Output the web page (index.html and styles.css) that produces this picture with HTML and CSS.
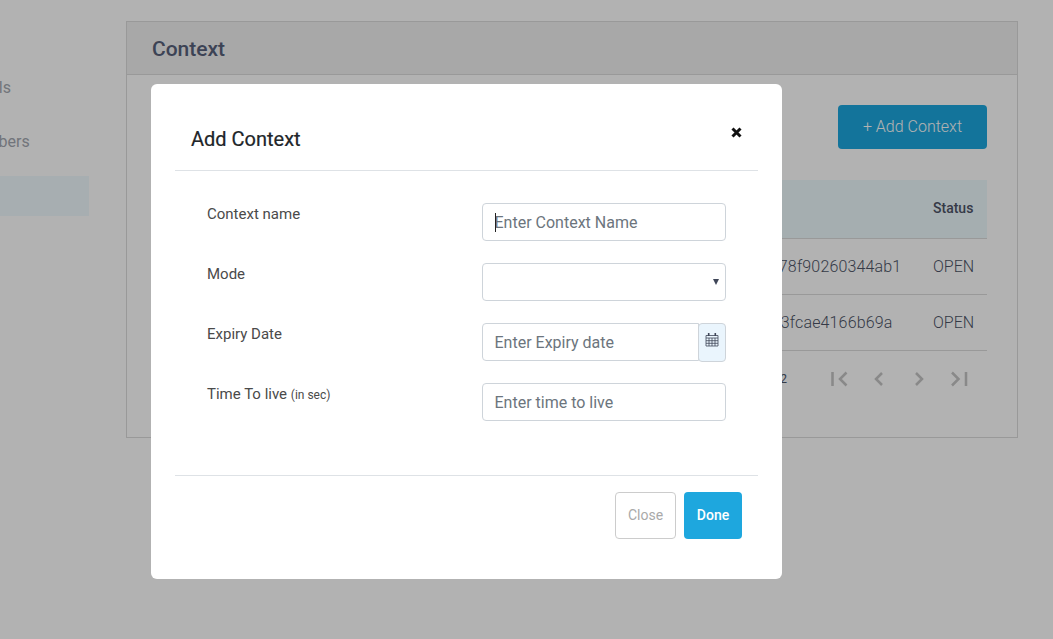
FILE: index.html
```html
<!DOCTYPE html>
<html lang="en">
<head>
    <meta charset="UTF-8">
    <meta name="viewport" content="width=device-width, initial-scale=1.0">
    <title>Context</title>
    <link rel="stylesheet" href="styles.css">
</head>
<body>
    <div class="page">
        <div class="sidebar">
            <div class="nav-item">Details</div>
            <div class="nav-item">Members</div>
            <div class="nav-item nav-item-active"></div>
        </div>
        <div class="panel">
            <div class="panel-header">Context</div>
            <div class="panel-body">
                <div class="toolbar">
                    <button class="btn-add">+ Add Context</button>
                </div>
                <div class="table-row table-head">
                    <div class="cell-hash"></div>
                    <div class="cell-status">Status</div>
                </div>
                <div class="table-row">
                    <div class="cell-hash">9c41d07be25a6178f90260344ab1</div>
                    <div class="cell-status">OPEN</div>
                </div>
                <div class="table-row">
                    <div class="cell-hash">e07f5f2194c6a083fcae4166b69a</div>
                    <div class="cell-status">OPEN</div>
                </div>
                <div class="pager">
                    <span class="pager-count">1 - 2 of 2</span>
                    <svg class="pager-icon" width="24" height="16" viewBox="0 0 24 16"><path d="M5.500 1v14M19.500 1.500L13 8l6.500 6.500"/></svg>
                    <svg class="pager-icon" width="24" height="16" viewBox="0 0 24 16"><path d="M15 2L9 8l6 6"/></svg>
                    <svg class="pager-icon" width="24" height="16" viewBox="0 0 24 16"><path d="M9 2l6 6-6 6"/></svg>
                    <svg class="pager-icon" width="24" height="16" viewBox="0 0 24 16"><path d="M5 1.500L11.500 8 5 14.500M19 1v14"/></svg>
                </div>
            </div>
        </div>
    </div>

    <div class="backdrop">
        <div class="modal">
            <div class="modal-header">
                <h2 class="modal-title">Add Context</h2>
                <svg class="modal-close" width="11" height="11" viewBox="0 0 11 11"><path d="M1.500 1.500l8 8M9.500 1.500l-8 8"/></svg>
            </div>
            <div class="modal-body">
                <div class="form-row">
                    <label class="form-label" for="name">Context name</label>
                    <div class="field">
                        <input class="form-input" id="name" type="text" placeholder="Enter Context Name">
                        <span class="caret"></span>
                    </div>
                </div>
                <div class="form-row">
                    <label class="form-label" for="mode">Mode</label>
                    <div class="field select-field">
                        <select class="form-input" id="mode"></select>
                    </div>
                </div>
                <div class="form-row">
                    <label class="form-label" for="expiry">Expiry Date</label>
                    <div class="field input-group">
                        <input class="form-input" id="expiry" type="text" placeholder="Enter Expiry date">
                        <div class="addon">
                            <svg width="14" height="15" viewBox="0 0 14 15"><path class="cal-line" d="M1 3.500h12v10.500H1zM1 6h12M1 8.700h12M1 11.300h12M4 6v8M7 6v8M10 6v8"/><path class="cal-ring" d="M3.700 1v3M10.300 1v3"/></svg>
                        </div>
                    </div>
                </div>
                <div class="form-row">
                    <label class="form-label" for="ttl">Time To live <small class="hint">(in sec)</small></label>
                    <div class="field">
                        <input class="form-input" id="ttl" type="text" placeholder="Enter time to live">
                    </div>
                </div>
            </div>
            <div class="modal-footer">
                <button class="btn btn-close">Close</button>
                <button class="btn btn-done">Done</button>
            </div>
        </div>
    </div>
</body>
</html>
```

FILE: styles.css
```css
* {
    box-sizing: border-box;
}
html, body {
    height: 100%;
}
body {
    margin: 0;
    overflow: hidden;
    background-color: white;
    font-family: Roboto, "Liberation Sans", sans-serif;
    font-size: 16px;
}
button {
    font-family: inherit;
}

.page {
    display: flex;
    align-items: flex-start;
    padding-top: 21px;
}
.sidebar {
    flex: none;
    width: 189px;
    margin-left: -100px;
    margin-right: 37px;
    padding-top: 47px;
}
.nav-item {
    height: 40px;
    margin-bottom: 14px;
    padding-left: 62px;
    line-height: 40px;
    color: #a3a7b0;
}
.nav-item-active {
    margin-top: 14px;
    background-color: #effafe;
}

.panel {
    flex: none;
    width: 892px;
    height: 417px;
    border: 1px solid #dcdcdc;
}
.panel-header {
    height: 53px;
    padding-left: 25px;
    line-height: 54px;
    font-size: 21px;
    font-weight: 500;
    color: #57607a;
    background-color: #f1f1f1;
    border-bottom: 1px solid #dcdcdc;
}
.panel-body {
    padding: 30px 30px 0 30px;
}
.toolbar {
    display: flex;
    justify-content: flex-end;
    margin-bottom: 31px;
}
.btn-add {
    width: 149px;
    height: 44px;
    padding-bottom: 2px;
    border: 0;
    border-radius: 4px;
    font-size: 16px;
    font-weight: 300;
    color: white;
    background-color: #1ca7de;
}
.table-row {
    display: flex;
    height: 56px;
    align-items: center;
    font-weight: 300;
    color: #4d5466;
    border-bottom: 1px solid #dcdcdc;
}
.table-head {
    height: 59px;
    padding-bottom: 2px;
    font-size: 14px;
    font-weight: 500;
    background-color: #edf9fd;
}
.cell-hash {
    flex: 1;
    padding-left: 497px;
    letter-spacing: 0.15px;
    white-space: nowrap;
}
.cell-status {
    flex: none;
    width: 54px;
    white-space: nowrap;
}
.pager {
    display: flex;
    align-items: center;
    justify-content: flex-end;
    height: 56px;
    padding-right: 16px;
    gap: 16px;
}
.pager-count {
    font-size: 12px;
    color: #4d5466;
    margin-right: 24px;
}
.pager-icon {
    fill: none;
    stroke: #c4c4c4;
    stroke-width: 2.5;
}

.backdrop {
    position: fixed;
    top: 0;
    left: 0;
    right: 0;
    bottom: 0;
    background-color: rgba(0, 0, 0, 0.3);
}
.modal {
    width: 631px;
    height: 495px;
    margin: 84px 0 0 151px;
    padding: 0 24px;
    background-color: white;
    border-radius: 6px;
}
.modal-header {
    position: relative;
    height: 87px;
    padding: 41px 16px 0 16px;
    border-bottom: 1px solid #dee2e6;
}
.modal-title {
    margin: 0;
    font-size: 20px;
    line-height: 28px;
    font-weight: 400;
    -webkit-text-stroke: 0.2px #212529;
    color: #212529;
}
.modal-close {
    position: absolute;
    top: 43px;
    right: 16px;
    fill: none;
    stroke: #111;
    stroke-width: 3;
}
.modal-body {
    height: 305px;
    padding: 32px 32px 0 32px;
    border-bottom: 1px solid #dee2e6;
}
.form-row {
    display: flex;
    justify-content: space-between;
    height: 38px;
    margin-bottom: 22px;
}
.form-label {
    padding-top: 2px;
    font-size: 15px;
    line-height: 18px;
    color: #4a4a4a;
}
.hint {
    font-size: 12px;
}
.field {
    position: relative;
    flex: none;
    width: 244px;
}
.form-input {
    display: block;
    width: 100%;
    height: 38px;
    padding: 0 11.5px;
    font-family: inherit;
    font-size: 16px;
    color: #495057;
    background-color: white;
    border: 1px solid #ced4da;
    border-radius: 4px;
    outline: none;
    appearance: none;
}
.form-input::placeholder {
    color: #6c757d;
    opacity: 1;
}
.caret {
    position: absolute;
    left: 13px;
    top: 10px;
    width: 1px;
    height: 19px;
    background-color: #222;
}
.select-field::after {
    content: "";
    position: absolute;
    top: 16px;
    right: 7px;
    border-top: 6px solid #3f4658;
    border-left: 3px solid transparent;
    border-right: 3px solid transparent;
}
.input-group {
    display: flex;
}
.input-group .form-input {
    flex: 1;
    min-width: 0;
    border-radius: 4px 0 0 4px;
}
.addon {
    flex: none;
    width: 28px;
    height: 39px;
    margin-left: -1px;
    padding: 8px 0 0 6px;
    background-color: #eaf5fd;
    border: 1px solid #ced4da;
    border-radius: 4px;
}
.addon svg {
    display: block;
    fill: none;
}
.cal-line {
    stroke: #3f4658;
    stroke-width: 0.8;
}
.cal-ring {
    stroke: #3f4658;
    stroke-width: 1.6;
}
.modal-footer {
    display: flex;
    justify-content: flex-end;
    gap: 8px;
    padding: 16px 16px 0 0;
}
.btn {
    height: 47px;
    padding-bottom: 2px;
    border-radius: 4px;
    font-size: 14px;
}
.btn-close {
    width: 61px;
    color: #a9a9a9;
    background-color: white;
    border: 1px solid #ccc;
}
.btn-done {
    width: 58px;
    font-weight: 500;
    color: white;
    background-color: #1ea7de;
    border: 0;
}
```
